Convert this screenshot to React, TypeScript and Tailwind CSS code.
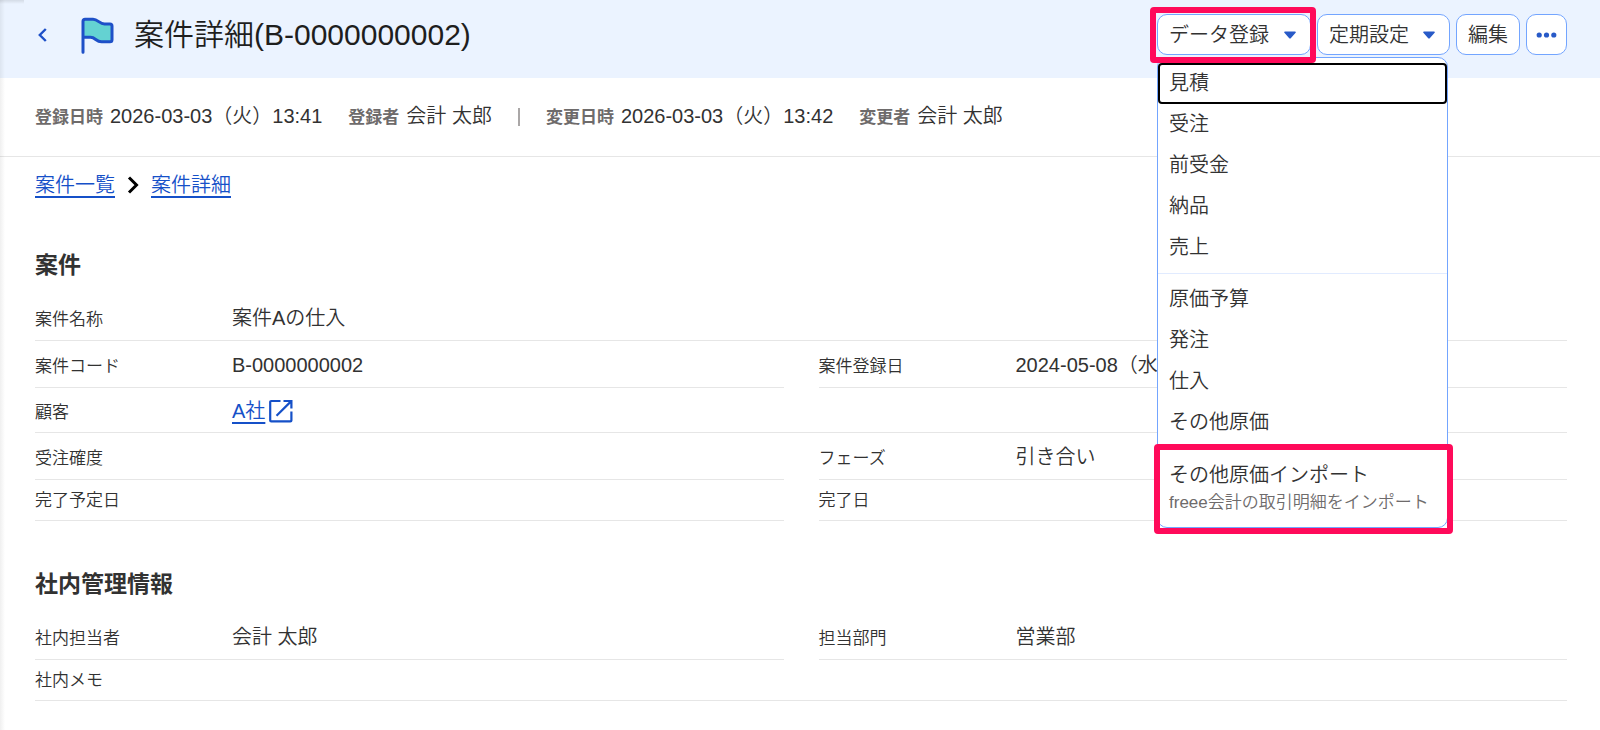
import { ReactNode } from 'react';

interface Field {
    label: string;
    value?: ReactNode;
}

interface FieldSection {
    title: string;
    // 'half' rows hold two fields, 'full' rows only one
    rows: { type: 'full' | 'half'; fields: Field[] }[];
}

const CustomerLink = () => (
    <a href="#customer" className="flex items-center gap-1 leading-7 text-[#1550c8]">
        <span className="underline underline-offset-4">A社</span>
        <svg width="24" height="24" viewBox="0 0 24 24" fill="none" stroke="#1550c8" strokeWidth="2.2">
            <path d="M11.5 2H2.2C1.6 2 1.2 2.4 1.2 3V21.4C1.2 22 1.6 22.4 2.2 22.4H21.4C22 22.4 22.4 22 22.4 21.4V12.5" />
            <path d="M14.5 2H22.4V9.5M22 2.4L7.5 16.8" />
        </svg>
    </a>
);

const sections: FieldSection[] = [
    {
        title: '案件',
        rows: [
            { type: 'full', fields: [{ label: '案件名称', value: '案件Aの仕入' }] },
            {
                type: 'half',
                fields: [
                    { label: '案件コード', value: 'B-0000000002' },
                    { label: '案件登録日', value: '2024-05-08（水）' },
                ],
            },
            { type: 'full', fields: [{ label: '顧客', value: <CustomerLink /> }] },
            {
                type: 'half',
                fields: [
                    { label: '受注確度', value: '\u00a0' },
                    { label: 'フェーズ', value: '引き合い' },
                ],
            },
            { type: 'half', fields: [{ label: '完了予定日' }, { label: '完了日' }] },
        ],
    },
    {
        title: '社内管理情報',
        rows: [
            {
                type: 'half',
                fields: [
                    { label: '社内担当者', value: '会計 太郎' },
                    { label: '担当部門', value: '営業部' },
                ],
            },
            { type: 'full', fields: [{ label: '社内メモ' }] },
        ],
    },
];

const menuGroups = [
    ['見積', '受注', '前受金', '納品', '売上'],
    ['原価予算', '発注', '仕入', 'その他原価'],
];

const buttonStyle = 'flex h-[41px] items-center rounded-[10px] border border-[#73a5ff] bg-white whitespace-nowrap';

function Caret() {
    return (
        <svg width="12" height="8" viewBox="0 0 12 8" fill="#285ac8">
            <path d="M1 0.5H11C11.8 0.5 12.1 1.2 11.6 1.8L7 6.9C6.4 7.6 5.6 7.6 5 6.9L0.4 1.8C-0.1 1.2 0.2 0.5 1 0.5Z" />
        </svg>
    );
}

function RegisterMenu() {
    return (
        <div
            role="menu"
            className="absolute top-[43px] left-0 z-10 w-[291px] rounded-[10px] border border-[#73a5ff] bg-white py-[5px]"
        >
            {menuGroups.map((group, gIndex) => (
                <div key={gIndex} className="mb-[5px] border-b border-[#e1ebff] pb-[5px]">
                    {group.map((item, index) => (
                        <button
                            key={item}
                            role="menuitem"
                            className={`block h-[41px] w-full px-[11px] pb-[2px] text-left ${
                                gIndex === 0 && index === 0 ? 'rounded outline-2 outline-black -outline-offset-2' : ''
                            }`}
                        >
                            {item}
                        </button>
                    ))}
                </div>
            ))}
            <div className="relative">
                <button role="menuitem" className="block w-full px-[11px] pt-[5px] pb-[7px] text-left whitespace-nowrap">
                    <span className="block leading-8">その他原価インポート</span>
                    <span className="block text-[17px] leading-6 text-[#6e6b6b]">freee会計の取引明細をインポート</span>
                </button>
                <span className="pointer-events-none absolute -top-[10px] -right-[6px] -bottom-3 -left-1 rounded border-[6px] border-[#ff0a5a]" />
            </div>
        </div>
    );
}

function Header() {
    return (
        <header className="flex h-[78px] items-center justify-between bg-[#ebf3ff] pr-[33px] pb-[9px] pl-[38px]">
            <div className="flex items-center">
                <a href="#back" aria-label="戻る">
                    <svg width="9" height="14" viewBox="0 0 9 14" fill="none" stroke="#1e50c8" strokeWidth="2.4">
                        <path d="M7.8 1L1.8 7L7.8 13" />
                    </svg>
                </a>
                <svg className="ml-[34px]" width="33" height="38" viewBox="0 -1 33 38">
                    <path d="M2 4.2C2 2.9 2.6 2.3 4 2.3H12C17 2.3 18.500 7 23.500 7H29C30.400 7 31 7.600 31 9V22.800C31 24.200 30.400 24.800 29 24.800H20.500C15 24.800 14.500 20.300 9.500 20.300H2Z" fill="#64d2d2" />
                    <path
                        d="M2 35.300V4.200C2 2.900 2.600 2.300 4 2.300H12C17 2.300 18.500 7 23.500 7H29C30.400 7 31 7.600 31 9V22.800C31 24.200 30.400 24.800 29 24.800H20.500C15 24.800 14.500 20.300 9.500 20.300H2"
                        fill="none"
                        stroke="#1e50c8"
                        strokeWidth="3"
                        strokeLinecap="round"
                        strokeLinejoin="round"
                    />
                </svg>
                <h1 className="ml-5 text-[30px] text-[#1e1e1e]">案件詳細(B-0000000002)</h1>
            </div>
            <div className="flex gap-[6px]">
                <div className="relative">
                    <button className={`${buttonStyle} w-[154px] justify-between pr-[14px] pl-[11px]`} aria-expanded="true">
                        データ登録
                        <Caret />
                    </button>
                    <RegisterMenu />
                    <span className="pointer-events-none absolute -top-[7px] -right-[5px] -bottom-[8px] -left-[7px] z-20 rounded border-[6px] border-[#ff0a5a]" />
                </div>
                <button className={`${buttonStyle} w-[133px] justify-between pr-[14px] pl-[11px]`}>
                    定期設定
                    <Caret />
                </button>
                <button className={`${buttonStyle} px-[11px]`}>編集</button>
                <button className={`${buttonStyle} px-[9px]`} aria-label="その他の操作">
                    <svg width="21" height="6" viewBox="0 0 21 6" fill="#285ac8">
                        <circle cx="3.2" cy="3" r="2.6" />
                        <circle cx="10.5" cy="3" r="2.6" />
                        <circle cx="17.8" cy="3" r="2.6" />
                    </svg>
                </button>
            </div>
        </header>
    );
}

function MetaItem({ label, value }: { label: string; value: string }) {
    return (
        <div className="flex items-baseline gap-[7px]">
            <dt className="text-[17px] font-bold text-[#6e6b6b]">{label}</dt>
            <dd>{value}</dd>
        </div>
    );
}

function FieldItem({ label, value }: Field) {
    return (
        <div className="flex items-baseline border-b border-[#e6e6e6] pt-[9px] pb-[7px]">
            <dt className="w-[197px] shrink-0 text-[17px] leading-6">{label}</dt>
            {value && <dd className="whitespace-nowrap">{value}</dd>}
        </div>
    );
}

export default function App() {
    return (
        <div className="relative min-h-screen bg-white font-['Liberation_Sans','Noto_Sans_CJK_JP',sans-serif] text-[20px] leading-[30px] font-[350] text-[#323232]">
            <Header />
            {/* shadows cast by the side and top navigation */}
            <div className="pointer-events-none absolute inset-y-0 left-0 w-[5px] bg-linear-to-r from-black/6 to-transparent" />
            <div className="pointer-events-none absolute top-0 left-0 h-1 w-6 bg-linear-to-b from-black/10 to-transparent" />

            <dl className="flex h-[79px] items-center gap-[26px] border-b border-[#e6e6e6] pl-[35px]">
                <MetaItem label="登録日時" value="2026-03-03（火）13:41" />
                <MetaItem label="登録者" value="会計 太郎" />
                <div className="h-[18px] w-[2px] bg-[#aaa7a7]" />
                <MetaItem label="変更日時" value="2026-03-03（火）13:42" />
                <MetaItem label="変更者" value="会計 太郎" />
            </dl>

            <main className="pr-[33px] pl-[35px]">
                <nav className="flex items-center pt-3 pb-px leading-8">
                    <a href="#list" className="text-[#1550c8] underline underline-offset-4">
                        案件一覧
                    </a>
                    <svg className="mx-3" width="12" height="18" viewBox="0 0 12 18" fill="none" stroke="#000" strokeWidth="3">
                        <path d="M2 1.5L9.5 9L2 16.5" />
                    </svg>
                    <a href="#detail" className="text-[#1550c8] underline underline-offset-4">
                        案件詳細
                    </a>
                </nav>

                {sections.map((section) => (
                    <section key={section.title} className="mt-[46px]">
                        <h2 className="mb-3 text-[23px] leading-[34px] font-bold">{section.title}</h2>
                        <dl>
                            {section.rows.map((row, index) => (
                                <div key={index} className={`grid gap-x-[35px] ${row.type === 'half' ? 'grid-cols-2' : ''}`}>
                                    {row.fields.map((field) => (
                                        <FieldItem key={field.label} {...field} />
                                    ))}
                                </div>
                            ))}
                        </dl>
                    </section>
                ))}
            </main>
        </div>
    );
}
